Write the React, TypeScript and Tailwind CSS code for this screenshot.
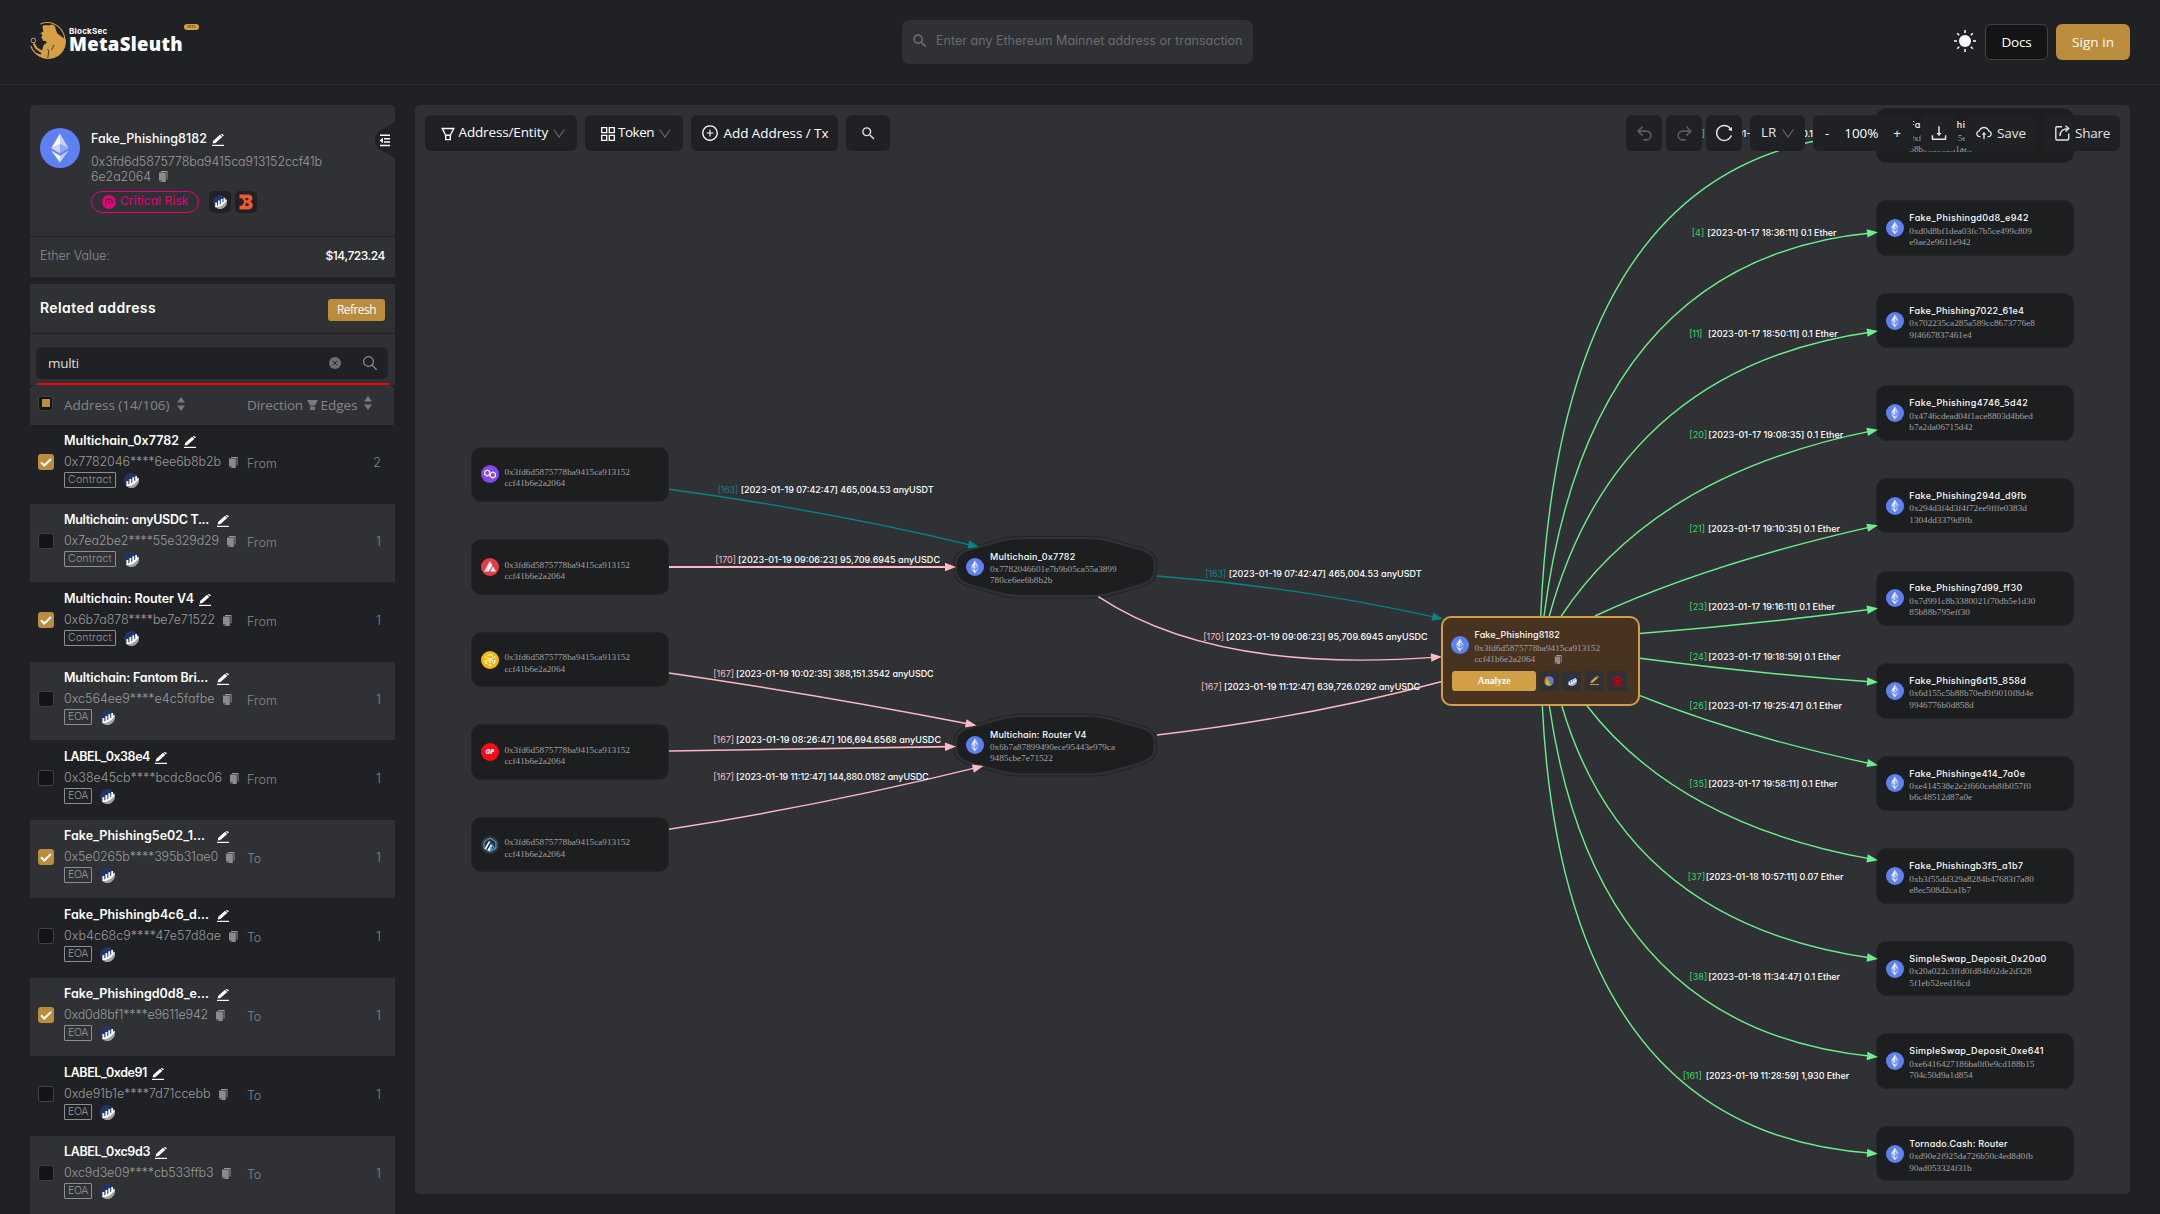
import { useLayoutEffect, useRef, useState } from "react";
import type { ReactNode } from "react";
import { Undo2, Redo2 } from "lucide-react";
import { AiOutlinePlusCircle, AiOutlineReload, AiOutlineDownload, AiOutlineCloudUpload } from "react-icons/ai";
import { MdSearch } from "react-icons/md";

const POP = "font-[Inter,sans-serif] [font-feature-settings:'cv11']";
const SEGOE = "font-['Open_Sans',sans-serif]";

/* Text that is tracked so that it fills exactly `w` pixels. */
function Fit({ w, className = "", children }: { w: number; className?: string; children: string }) {
  const ref = useRef<HTMLSpanElement>(null);
  const [ls, setLs] = useState(0);
  useLayoutEffect(() => {
    const el = ref.current;
    if (!el) return;
    const now = parseFloat(el.style.letterSpacing || "0") || 0;
    const natural = el.getBoundingClientRect().width - now * children.length;
    setLs((w - natural) / children.length);
  }, [w, children]);
  return (
    <span ref={ref} className={`inline-block shrink-0 whitespace-pre ${className}`} style={{ letterSpacing: `${ls}px` }}>
      {children}
    </span>
  );
}

/* ---------- icons ---------- */

function Eth({ size }: { size: number }) {
  return (
    <svg width={size} height={size} viewBox="0 0 40 40" className="shrink-0">
      <circle cx="20" cy="20" r="20" fill="#5d80f3" />
      <path d="M20 5.5v10.8l8.6 3.9z" fill="#c3d0fb" />
      <path d="M20 5.5l-8.8 14.7 8.8-3.9z" fill="#fff" />
      <path d="M20 16.3l-8.8 3.9 8.800 5.200z" fill="#c9d5fb" />
      <path d="M20 16.3l8.600 3.900-8.600 5.200z" fill="#8fa8f8" />
      <path d="M11.200 22.600L20 27.700v6.800z" fill="#fff" />
      <path d="M28.600 22.600L20 27.700v6.800z" fill="#c3d0fb" />
    </svg>
  );
}

function Pencil({ className = "", color = "#fff", size = 12 }: { className?: string; color?: string; size?: number }) {
  return (
    <svg width={size} height={size} viewBox="0 0 12 12" className={`shrink-0 ${className}`}>
      <path d="M.6 9.600l.7-2.900L8 .7 10.200 2.900 3.500 9zM8.700.3L9.500 0 12 1.100l-1.200 1.300z" fill={color} />
      <rect x="0" y="10.800" width="12" height="1.200" fill={color} />
    </svg>
  );
}

function Copy({ className = "", size = 11 }: { className?: string; size?: number }) {
  return (
    <svg width={size - 1} height={size} viewBox="0 0 10 11" className={`shrink-0 ${className}`}>
      <path d="M3 0h6.500v8.600H8.600V1H3z" fill="#9a9a9a" />
      <path d="M1 1.600h6.800V11H3.400V9.200H1z" fill="#8b8b8b" />
      <path d="M1 9.800h1.800V11z" fill="#8b8b8b" />
    </svg>
  );
}

function Etherscan({ size = 15, className = "" }: { size?: number; className?: string }) {
  return (
    <svg width={size} height={size} viewBox="0 0 16 16" className={`shrink-0 ${className}`}>
      <path d="M2 13.300A8 8 0 1 1 15.700 5.800C13.500 9.500 9 12.800 2 13.300z" fill="#22356a" />
      <path d="M3.200 14.400A8 8 0 0 0 15.800 6.300C13.800 10 9.300 13.500 3.200 14.400z" fill="#a3a3a2" />
      <path d="M2.600 8.600h2v3.700l1.200-.5V6.300h2v4.700l1.100-.7V4.600h2v4.300l1.100-1V3.300h1.900v2.900l1.200-1.500.8 1.600C13.800 10 9.300 13.800 3.200 14.400c-.6-.5-.9-.9-1.200-1.300l.6-.3z" fill="#fff" />
    </svg>
  );
}

function Chevron({ className = "" }: { className?: string }) {
  return (
    <svg width="12" height="9" viewBox="0 0 12 9" className={`shrink-0 ${className}`}>
      <path d="M.6.5L6 8 11.400.5" fill="none" stroke="#6b6c6f" strokeWidth="1.100" />
    </svg>
  );
}

function Sorter({ className = "" }: { className?: string }) {
  return (
    <svg width="8" height="14" viewBox="0 0 8 14" className={`shrink-0 ${className}`}>
      <path d="M4 0l4 5.500H0zM4 14L0 8.500h8z" fill="#77787b" />
    </svg>
  );
}

function Logo() {
  return (
    <svg width="36" height="38" viewBox="0 0 36 38" className="shrink-0">
      <path d="M10.500 2A17.500 17.500 0 1 1 .8 24" fill="none" stroke="#d59f45" strokeWidth="1.100" />
      <path d="M12.300 4.300L15 3l3.500.6L22.300 2.500 25 4.300l.8 3.500 1.400 3.500L32 15l3.800 2.500A17.500 17.500 0 0 1 18 37C12 36.800 7.500 34 4.800 30.500l5.700 2 1-1.300-6.300-4.700-2.400-4.700 1.800-.8 2.500 4.500 5 3 1.400-5.300 3.500-2.700-1.800-1.700-2.200.2-.7-2.200-1.200-1.300 1.300-2-.4-1.200-1.500-.3.700-1.300 2.200-1.200z" fill="#d59f45" />
      <circle cx="3.400" cy="18.500" r="2.300" fill="none" stroke="#d59f45" strokeWidth="1" />
      <path d="M17.500 27l1.300 2-1 7M24 23l-2.400 5M27 4.500l2 4.500" stroke="#202125" strokeWidth=".8" fill="none" />
    </svg>
  );
}

/* ---------- sidebar ---------- */

type Row = { name: string; nw: number; addr: string; aw: number; on?: boolean; dir: string; n: string; tag: string; wide?: boolean };
const rows: Row[] = [
  { name: "Multichain_0x7782", nw: 115, addr: "0x7782046****6ee6b8b2b", aw: 157, on: true, dir: "From", n: "2", tag: "Contract" },
  { name: "Multichain: anyUSDC T...", nw: 145, wide: true, addr: "0x7ea2be2****55e329d29", aw: 155, dir: "From", n: "1", tag: "Contract" },
  { name: "Multichain: Router V4", nw: 130, addr: "0x6b7a878****be7e71522", aw: 151, on: true, dir: "From", n: "1", tag: "Contract" },
  { name: "Multichain: Fantom Bri...", nw: 144, wide: true, addr: "0xc564ee9****e4c5fafbe", aw: 150.500, dir: "From", n: "1", tag: "EOA" },
  { name: "LABEL_0x38e4", nw: 86, addr: "0x38e45cb****bcdc8ac06", aw: 158, dir: "From", n: "1", tag: "EOA" },
  { name: "Fake_Phishing5e02_1...", nw: 141, wide: true, addr: "0x5e0265b****395b31ae0", aw: 154, on: true, dir: "To", n: "1", tag: "EOA" },
  { name: "Fake_Phishingb4c6_d...", nw: 145, wide: true, addr: "0xb4c68c9****47e57d8ae", aw: 157, dir: "To", n: "1", tag: "EOA" },
  { name: "Fake_Phishingd0d8_e...", nw: 145, wide: true, addr: "0xd0d8bf1****e9611e942", aw: 144, on: true, dir: "To", n: "1", tag: "EOA" },
  { name: "LABEL_0xde91", nw: 83, addr: "0xde91b1e****7d71ccebb", aw: 146.500, dir: "To", n: "1", tag: "EOA" },
  { name: "LABEL_0xc9d3", nw: 86, addr: "0xc9d3e09****cb533ffb3", aw: 149.500, dir: "To", n: "1", tag: "EOA" },
];

function AddressRow({ r, light }: { r: Row; light: boolean }) {
  return (
    <div className={`flex h-[79px] border-b border-[#202125] pl-2 pr-3.5 ${light ? "bg-[#303135]" : "bg-[#202125]"}`}>
      <div className="mt-[29px] w-[26px]">
        {r.on ? (
          <div className="flex size-4 items-center justify-center rounded-[3px] bg-[#bb8c3c]">
            <svg width="12" height="9" viewBox="0 0 12 9">
              <path d="M1 4.200l3.300 3.300L11 1" fill="none" stroke="#fff" strokeWidth="2" />
            </svg>
          </div>
        ) : (
          <div className="size-4 rounded-[3px] border border-[#404144] bg-[#141414]" />
        )}
      </div>
      <div className="w-[183px] pt-[6px]">
        <div className="flex h-5 items-center">
          <div className={r.wide ? "flex w-[153px]" : "flex"}>
            <Fit w={r.nw} className={`${POP} text-[12.500px] leading-5 font-semibold text-white`}>{r.name}</Fit>
          </div>
          <Pencil className={`mt-[2px] ${r.wide ? "" : "ml-[5px]"}`} />
        </div>
        <div className="mt-[1px] flex h-5 items-center">
          <Fit w={r.aw} className={`${POP} text-[12.500px] leading-5 font-light text-[#9b9b9b]`}>{r.addr}</Fit>
          <Copy className="ml-[7px]" />
        </div>
        <div className="mt-0 flex items-center">
          <div className={`flex h-4 items-center justify-center rounded-[1px] border border-[#8e8e8e] ${r.tag === "EOA" ? "w-7" : "w-[52px]"}`}>
            <Fit w={r.tag === "EOA" ? 20 : 44} className={`${POP} text-[10.500px] leading-4 font-light text-[#9b9b9b]`}>{r.tag}</Fit>
          </div>
          <Etherscan className="ml-2" />
        </div>
      </div>
      <div className={`${POP} mt-[29px] flex-1 text-[12.500px] leading-5 font-light text-[#85868a]`}>
        <Fit w={r.dir === "To" ? 14 : 30}>{r.dir}</Fit>
      </div>
      <div className={`${POP} mt-[28px] text-[12.500px] leading-5 font-light text-[#85868a]`}>{r.n}</div>
    </div>
  );
}

function Sidebar() {
  return (
    <aside className="w-[365px] shrink-0">
      <section className="relative rounded-t-[5px] bg-[#303135]">
        <svg width="21" height="40" viewBox="0 0 21 40" className="absolute top-[15px] right-0">
          <path d="M21 0c-1 8-20 6-20 20s19 12 20 20z" fill="#202125" />
          <path d="M6 15.200h10M10 18.700h6M10 22h6M6 25.500h10" stroke="#fff" strokeWidth="1.500" />
          <path d="M5.500 20.400l3.500-2.600v5.200z" fill="#fff" />
        </svg>
        <div className="flex h-[131px] pl-2.5 pt-[23px]">
          <Eth size={40} />
          <div className="ml-[11px]">
            <div className="mt-[1px] flex h-5 items-center">
              <Fit w={116} className={`${POP} text-[12.500px] font-medium text-white`}>Fake_Phishing8182</Fit>
              <Pencil className="mt-[2px] ml-[5px]" />
            </div>
            <div className={`${POP} mt-[5px] text-[12.500px] leading-[15px] font-light text-[#9b9b9b]`}>
              <div><Fit w={231}>0x3fd6d5875778ba9415ca913152ccf41b</Fit></div>
              <div className="flex items-center">
                <Fit w={60}>6e2a2064</Fit>
                <Copy className="ml-[7px]" />
              </div>
            </div>
            <div className="mt-[7px] flex items-center">
              <div className="flex h-[22px] w-[108px] items-center rounded-full border border-[#e6007a] pl-2.5">
                <svg width="14" height="14" viewBox="0 0 14 14">
                  <circle cx="7" cy="7" r="7" fill="#e6007a" />
                  <path d="M4.500 9.500a3.300 3.300 0 1 1 5 0M6 6.800h1.400v3" fill="none" stroke="#303135" strokeWidth="1.100" />
                </svg>
                <Fit w={68.500} className={`${POP} -mt-[3px] ml-1 text-[12px] leading-5 text-[#e6007a]`}>Critical Risk</Fit>
              </div>
              <div className="ml-2.5 flex size-[22px] items-center justify-center rounded-[5px] bg-[#202125]"><Etherscan size={14} /></div>
              <div className="ml-1 flex size-[22px] items-center justify-center rounded-[5px] bg-[#202125]">
                <svg width="14" height="16" viewBox="0 0 14 16">
                  <path d="M.5.500h8.700c5 0 5.300 5.800 2 7 4 1.500 3.300 8-1.900 8H.5v-3.700h2.300L5 8.500V7L3 4.200H.5zM6.500 4v2.300h1.800c1.500 0 1.500-2.300 0-2.300zM6.500 9.300v2.700h2c1.700 0 1.700-2.700 0-2.700z" fill="#f4562f" fillRule="evenodd" />
                </svg>
              </div>
            </div>
          </div>
        </div>
        <div className={`${POP} flex h-[41px] items-center justify-between border-t border-[#202125] px-2.5 pb-[2px] text-[12.500px]`}>
          <Fit w={70} className="font-light text-[#8e8e90]">Ether Value:</Fit>
          <Fit w={59.500} className="text-[12px] font-medium text-white">$14,723.24</Fit>
        </div>
      </section>

      <section className="mt-[7px] bg-[#303135]">
        <div className="flex h-[49px] items-center justify-between px-2.5">
          <Fit w={116} className={`${POP} -mt-[2px] text-[14px] font-semibold text-white`}>Related address</Fit>
          <div className={`${SEGOE} mt-[2px] flex h-[22px] w-[57px] items-center justify-center rounded-[3px] bg-[#bb8c3c] text-[12px] text-white`}>
            <Fit w={39}>Refresh</Fit>
          </div>
        </div>
        <div className="border-t border-[#202125] px-1.5 pt-[13px]">
          <div className="flex h-8 w-[352px] items-center rounded-md bg-[#202125] pr-[11px] pl-3">
            <div className="flex flex-1">
              <Fit w={31} className={`${SEGOE} text-[13.500px] text-[#dedede]`}>multi</Fit>
            </div>
            <svg width="12" height="12" viewBox="0 0 12 12">
              <circle cx="6" cy="6" r="6" fill="#6c6d6f" />
              <path d="M3.800 3.800l4.400 4.400M8.200 3.800L3.800 8.200" stroke="#202125" strokeWidth="1" />
            </svg>
            <svg width="14" height="14" viewBox="0 0 14 14" className="ml-[22px]">
              <circle cx="5.500" cy="5.500" r="4.900" fill="none" stroke="#909193" strokeWidth="1.100" />
              <path d="M9 9l4.700 4.700" stroke="#909193" strokeWidth="1.200" />
            </svg>
          </div>
          <div className="mt-1 ml-[1px] h-0.5 w-[352px] bg-[#fb0006]" />
        </div>
      </section>
      <div className={`${SEGOE} flex h-10 w-[364px] items-center rounded-t-[5px] bg-[#303135] pl-2 text-[13.500px] text-[#85868a]`}>
        <div className="-mt-1 mr-[11px] flex size-[15px] items-center justify-center rounded-[3px] border border-[#404144] bg-[#141414]">
          <div className="size-2 bg-[#bb8c3c]" />
        </div>
        <Fit w={105.500}>Address (14/106)</Fit>
        <Sorter className="-mt-[3px] ml-[7px]" />
        <Fit w={56} className="ml-[62.500px]">Direction</Fit>
        <svg width="11" height="10" viewBox="0 0 11 10" className="ml-[4px]">
          <path d="M0 0h11L8 5.500H3zM3 6.500h5V10H3z" fill="#77787b" />
        </svg>
        <Fit w={37} className="ml-[2.500px]">Edges</Fit>
        <Sorter className="-mt-[5px] ml-[6px]" />
      </div>
      {rows.map((r, i) => (
        <AddressRow key={r.name} r={r} light={i % 2 === 1} />
      ))}
    </aside>
  );
}

/* ---------- graph ---------- */

const OX = 415;
const OY = 105;
const GREEN = "#68f08a";
const PINK = "#ffb8c4";
const TEAL = "#068580";

type Edge = { p: number[]; c: string; w?: number; arrow?: boolean };
const edges: Edge[] = [
  { p: [1540.700, 616, 1561, 147, 1878, 134], c: GREEN },
  { p: [1544, 616, 1590, 259, 1878, 232.300], c: GREEN },
  { p: [1549.300, 616, 1617, 368, 1878, 331], c: GREEN },
  { p: [1561.300, 616, 1655, 474, 1878, 429.700], c: GREEN },
  { p: [1595, 616, 1707, 564, 1878, 525.300], c: GREEN },
  { p: [1640, 633.500, 1760, 624, 1878, 608.300], c: GREEN },
  { p: [1640, 658.300, 1760, 674, 1878, 682.300], c: GREEN },
  { p: [1640, 695.700, 1740, 736, 1878, 765.300], c: GREEN },
  { p: [1586.700, 705.500, 1679, 825, 1878, 860.300], c: GREEN },
  { p: [1561.700, 705.500, 1626, 924, 1878, 959], c: GREEN },
  { p: [1549.300, 705.500, 1596, 1030, 1878, 1057], c: GREEN },
  { p: [1542.300, 705.500, 1563, 1133, 1878, 1153.700], c: GREEN },
  { p: [669, 489.300, 830, 511, 979, 547], c: TEAL },
  { p: [669, 567, 812, 567, 956, 567], c: PINK, w: 2 },
  { p: [669, 673, 820, 695, 976.500, 725.500], c: PINK },
  { p: [669, 751, 812, 749, 956, 746.500], c: PINK, w: 1.600 },
  { p: [669, 829.300, 825, 805, 983.500, 766], c: PINK },
  { p: [1156.700, 576, 1300, 587, 1443, 619], c: TEAL },
  { p: [1098.300, 596.700, 1215, 674, 1442, 656.700], c: PINK },
  { p: [1157, 735, 1310, 717, 1441, 681.700], c: PINK, arrow: false },
];

type Label = { tag: string; text: string; tx: number; tw: number; x: number; w: number; y: number; c: string };
const TAG = "#2fdc68";
const labels: Label[] = [
  { tag: "[3]", tx: 1692, tw: 13, text: "[2023-01-17 18:35:47] 0.1 Ether", x: 1708, w: 129, y: 137, c: TAG },
  { tag: "[4]", tx: 1691.700, tw: 12.500, text: "[2023-01-17 18:36:11] 0.1 Ether", x: 1707.300, w: 129.300, y: 236, c: TAG },
  { tag: "[11]", tx: 1689.300, tw: 13, text: "[2023-01-17 18:50:11] 0.1 Ether", x: 1708, w: 129.700, y: 337, c: TAG },
  { tag: "[20]", tx: 1689.300, tw: 18, text: "[2023-01-17 19:08:35] 0.1 Ether", x: 1708.300, w: 135, y: 438, c: TAG },
  { tag: "[21]", tx: 1689.300, tw: 15.700, text: "[2023-01-17 19:10:35] 0.1 Ether", x: 1708, w: 132, y: 532, c: TAG },
  { tag: "[23]", tx: 1689.300, tw: 18, text: "[2023-01-17 19:16:11] 0.1 Ether", x: 1708.300, w: 126.700, y: 610, c: TAG },
  { tag: "[24]", tx: 1689.300, tw: 18, text: "[2023-01-17 19:18:59] 0.1 Ether", x: 1708.300, w: 132.300, y: 660, c: TAG },
  { tag: "[26]", tx: 1689.300, tw: 18, text: "[2023-01-17 19:25:47] 0.1 Ether", x: 1708.300, w: 133.700, y: 709, c: TAG },
  { tag: "[35]", tx: 1689.300, tw: 18, text: "[2023-01-17 19:58:11] 0.1 Ether", x: 1708.300, w: 129.300, y: 787, c: TAG },
  { tag: "[37]", tx: 1687.700, tw: 17.500, text: "[2023-01-18 10:57:11] 0.07 Ether", x: 1705.700, w: 137.700, y: 880, c: TAG },
  { tag: "[38]", tx: 1689.300, tw: 18, text: "[2023-01-18 11:34:47] 0.1 Ether", x: 1708.300, w: 131.700, y: 980, c: TAG },
  { tag: "[161]", tx: 1682.700, tw: 19, text: "[2023-01-19 11:28:59] 1,930 Ether", x: 1705.700, w: 143.500, y: 1079, c: TAG },
  { tag: "[163]", tx: 717.700, tw: 20.500, text: "[2023-01-19 07:42:47] 465,004.53 anyUSDT", x: 740.700, w: 193, y: 493, c: TEAL },
  { tag: "[170]", tx: 715.300, tw: 20.700, text: "[2023-01-19 09:06:23] 95,709.6945 anyUSDC", x: 738, w: 202, y: 563, c: PINK },
  { tag: "[167]", tx: 713.300, tw: 20.700, text: "[2023-01-19 10:02:35] 388,151.3542 anyUSDC", x: 736, w: 197.700, y: 677, c: PINK },
  { tag: "[167]", tx: 713.300, tw: 20.700, text: "[2023-01-19 08:26:47] 106,694.6568 anyUSDC", x: 736, w: 205, y: 743, c: PINK },
  { tag: "[167]", tx: 713.300, tw: 20.700, text: "[2023-01-19 11:12:47] 144,880.0182 anyUSDC", x: 736, w: 192.700, y: 780, c: PINK },
  { tag: "[163]", tx: 1205.300, tw: 21, text: "[2023-01-19 07:42:47] 465,004.53 anyUSDT", x: 1228.700, w: 193, y: 577, c: TEAL },
  { tag: "[170]", tx: 1203.300, tw: 20.700, text: "[2023-01-19 09:06:23] 95,709.6945 anyUSDC", x: 1226, w: 201.700, y: 640, c: PINK },
  { tag: "[167]", tx: 1201, tw: 20.700, text: "[2023-01-19 11:12:47] 639,726.0292 anyUSDC", x: 1224, w: 196, y: 690, c: PINK },
];

function EdgePath({ e }: { e: Edge }) {
  const [x0, y0, cx, cy, x1, y1] = e.p;
  const a = Math.atan2(y1 - cy, x1 - cx);
  const back = e.arrow === false ? 0 : 5;
  const ex = x1 - back * Math.cos(a);
  const ey = y1 - back * Math.sin(a);
  return (
    <g>
      <path d={`M${x0} ${y0}Q${cx} ${cy} ${ex} ${ey}`} fill="none" stroke={e.c} strokeWidth={e.w ?? 1.400} />
      {e.arrow !== false && (
        <path d="M0 0L-11 -4.200V4.200z" fill={e.c} transform={`translate(${x1} ${y1}) rotate(${(a * 180) / Math.PI})`} />
      )}
    </g>
  );
}

const OCT =
  "M972 550L1003 541.500Q1012 539.300 1021 539.300H1090Q1099 539.300 1108 541.500L1139 550Q1153.500 554 1153.500 563V571Q1153.500 580 1139 584.500L1108 593Q1099 595 1090 595H1021Q1012 595 1003 593L972 584.500Q957 580 957 571V563Q957 554 972 550z";
const RING =
  "M970 547.500L1002 538.500Q1011 536.300 1020 536.300H1091Q1100 536.300 1109 538.500L1141 547.500Q1156.300 552 1156.300 562V572Q1156.300 582 1141 587L1109 596Q1100 598 1091 598H1020Q1011 598 1002 596L970 587Q954 582 954 572V562Q954 552 970 547.500z";

function At({ x, y, className = "", children }: { x: number; y: number; className?: string; children: ReactNode }) {
  return (
    <div className={`absolute ${className}`} style={{ left: x - OX, top: y - OY }}>
      {children}
    </div>
  );
}

const NODE = "flex h-[55.500px] w-[197.300px] items-center rounded-[10px] border border-[#242528] bg-[#1d1e20]";

function NodeText({ name, nw, a, b }: { name?: string; nw?: number; a: string; b: string }) {
  return (
    <div>
      {name && (
        <div className={`${POP} flex h-3 text-[9px] leading-3 font-medium text-white`}>
          <Fit w={nw ?? 80}>{name}</Fit>
        </div>
      )}
      <div className="mt-[1.500px] -mb-[1.500px] font-['Liberation_Serif',serif] text-[9.200px] leading-[11.400px] text-[#a0a1a2]">
        <div>{a}</div>
        <div>{b}</div>
      </div>
    </div>
  );
}

const targets = [
  { name: "Fake_Phishing5e02_1ae0", nw: 118, a: "0xf5e0265b15e79c40d2ab68e7", b: "58b00395b31ae0" },
  { name: "Fake_Phishingd0d8_e942", nw: 119.700, a: "0xd0d8bf1dea03fc7b5ce499c809", b: "e9ae2e9611e942" },
  { name: "Fake_Phishing7022_61e4", nw: 115, a: "0x702235ca285a589cc8673776e8", b: "9f4667837461e4" },
  { name: "Fake_Phishing4746_5d42", nw: 119, a: "0x4746cdead04f1ace8803d4b6ed", b: "b7a2da06715d42" },
  { name: "Fake_Phishing294d_d9fb", nw: 117.500, a: "0x294d3f4d3f4f72ee9fffe0383d", b: "1304dd3379d9fb" },
  { name: "Fake_Phishing7d99_ff30", nw: 113.300, a: "0x7d991c8b3380021f70db5e1d30", b: "85b88b795eff30" },
  { name: "Fake_Phishing6d15_858d", nw: 117, a: "0x6d155c5b88b70ed9f9010f8d4e", b: "9946776b0d858d" },
  { name: "Fake_Phishinge414_7a0e", nw: 116, a: "0xe414538e2e2f660ceb8fb057f0", b: "b6c48512d87a0e" },
  { name: "Fake_Phishingb3f5_a1b7", nw: 114, a: "0xb3f55dd329a8284b47683f7a80", b: "e8ec508d2ca1b7" },
  { name: "SimpleSwap_Deposit_0x20a0", nw: 137.500, a: "0x20a022c3ffd0fd84b92de2d328", b: "5f1eb52eed16cd" },
  { name: "SimpleSwap_Deposit_0xe641", nw: 134.500, a: "0xe6416427186ba0f0e9cd188b15", b: "704c50d9a1d854" },
  { name: "Tornado.Cash: Router", nw: 98.500, a: "0xd90e2f925da726b50c4ed8d0fb", b: "90ad053324f31b" },
];

const chains = [
  <svg key="polygon" width="18" height="18" viewBox="0 0 18 18">
    <circle cx="9" cy="9" r="9" fill="#8548ea" />
    <path d="M8.700 9.400L6.300 11 3.700 9.500v-3L6.300 5l2.400 1.500v3.300M9.300 8.500v3L11.800 13l2.600-1.500v-3L11.800 7 9.300 8.500 8.700 9" fill="none" stroke="#fff" strokeWidth="1.200" strokeLinejoin="round" />
  </svg>,
  <svg key="avalanche" width="18" height="18" viewBox="0 0 18 18">
    <circle cx="9" cy="9" r="9" fill="#ea3943" />
    <path d="M8.900 3.500l2.200 3.800-3.300 5.900H3.600zM12.100 8.900l2.500 4.300H9.700z" fill="#fff" stroke="#fff" strokeWidth=".5" strokeLinejoin="round" />
  </svg>,
  <svg key="bnb" width="18" height="18" viewBox="0 0 18 18">
    <circle cx="9" cy="9" r="9" fill="#f4b70b" />
    <path d="M9 3.300l2.500 1.400M9 3.300L6.500 4.700M4.300 6.800v-.9l.8-.5M13.700 6.800v-.9l-.8-.5M4.300 9v2.500L6.300 12.700M13.700 9v2.500l-2 1.200M7.700 13.800L9 14.600l1.300-.8M6 6.800l3 1.700 3-1.700M9 8.500v3.800M6 9.300l1.500.9M12 9.300l-1.500.9" fill="none" stroke="#fff" strokeWidth="1.300" />
  </svg>,
  <svg key="optimism" width="18" height="18" viewBox="0 0 18 18">
    <circle cx="9" cy="9" r="9" fill="#ff0a12" />
    <text x="9" y="11.300" textAnchor="middle" fontFamily="Open Sans" fontWeight="800" fontStyle="italic" fontSize="6.500" fill="#fff">OP</text>
  </svg>,
  <svg key="arbitrum" width="18" height="18" viewBox="0 0 18 18">
    <circle cx="9" cy="9" r="9" fill="#2a3a52" />
    <path d="M9 2.300l5.900 3.300v6.800L9 15.700l-5.900-3.300V5.600z" fill="#213147" stroke="#8fa9c2" strokeWidth=".9" />
    <path d="M3.600 12.500L7.600 5.500h2L5 13.300z" fill="#fff" />
    <path d="M6.500 14L10.200 7.500l1.200 2L9.200 14.500 8 15z" fill="#fff" />
    <path d="M11 7.500l3.300 5-1.400.8-3-4.700zM9.900 10l2 3.500-1.600 1-1.200-2.400z" fill="#28a0f0" />
  </svg>,
];

function SmallButton({ children }: { children: ReactNode }) {
  return <div className="flex h-[20px] w-[19.500px] items-center justify-center rounded-[3px] bg-[#303135]">{children}</div>;
}

function Graph() {
  return (
    <div className="absolute inset-0">
      {chains.map((icon, i) => (
        <At key={i} x={471.400} y={446.600 + i * 92.580}>
          <div className={`${NODE} pl-[8.500px]`}>
            <div className="mr-[5.500px] size-[18px]">{icon}</div>
            <div className="pt-[5px]"><NodeText a="0x3fd6d5875778ba9415ca913152" b="ccf41b6e2a2064" /></div>
          </div>
        </At>
      ))}

      {targets.map((t, i) => (
        <At key={t.name} x={1876.300} y={107.600 + i * 92.580}>
          <div className={`${NODE} pl-[8.500px]`}>
            <Eth size={18} />
            <div className="ml-[5.500px] pt-[3px]"><NodeText {...t} /></div>
          </div>
        </At>
      ))}

      <svg width="1715" height="1089" viewBox="415 105 1715 1089" className="absolute inset-0">
        {[0, 178].map((dy) => (
          <g key={dy} transform={`translate(0 ${dy})`}>
            <path d={RING} fill="#303135" stroke="#232427" strokeWidth="1.200" />
            <path d={OCT} fill="#1d1e20" />
          </g>
        ))}
        {edges.map((e, i) => (
          <EdgePath key={i} e={e} />
        ))}
        <g className={POP} fontSize="9">
          {labels.map((l, i) => (
            <g key={i}>
              <text x={l.tx} y={l.y} textLength={l.tw} fill={l.c}>{l.tag}</text>
              <text x={l.x} y={l.y} textLength={l.w} fill="#fff" fontWeight="500">{l.text}</text>
            </g>
          ))}
        </g>
      </svg>

      <At x={966} y={549.500} className="flex items-center">
        <Eth size={18} />
        <div className="ml-[6px] pt-[1px]"><NodeText name="Multichain_0x7782" nw={85.500} a="0x7782046601e7b9b05ca55a3899" b="780ce6ee6b8b2b" /></div>
      </At>
      <At x={966} y={727.500} className="flex items-center">
        <Eth size={18} />
        <div className="ml-[6px] pt-[1px]"><NodeText name="Multichain: Router V4" nw={96.500} a="0x6b7a87899490ece95443e979ca" b="9485cbe7e71522" /></div>
      </At>

      <At x={1440.500} y={615.500}>
        <div className="h-[90px] w-[199.500px] rounded-[10px] border-2 border-[#d39f46] bg-[#483321] pt-[11.500px] pl-[8.500px]">
          <div className="flex">
            <div className="pt-[7px]"><Eth size={18} /></div>
            <div className="ml-[5.500px]"><NodeText name="Fake_Phishing8182" nw={85.500} a="0x3fd6d5875778ba9415ca913152" b="ccf41b6e2a2064" /></div>
            <Copy size={9} className="mt-[25.500px] -ml-[46px]" />
          </div>
          <div className="mt-[7px] ml-[1px] flex gap-[3.200px]">
            <div className="flex h-[20px] w-[84px] items-center justify-center rounded-[3px] bg-[#d39f46] font-['Liberation_Serif',serif] text-[9.500px] font-bold text-white">Analyze</div>
            <SmallButton>
              <svg width="10" height="10" viewBox="0 0 10 10">
                <circle cx="5" cy="5" r="4.800" fill="#7b6bd6" />
                <path d="M2 1.300A4.800 4.800 0 0 0 2 8.700L5.500 5z" fill="#e0402f" />
                <path d="M2.500 1L6.500 9.500A4.800 4.800 0 0 1 1.500 8z" fill="#f0b429" />
                <path d="M3.500.5l4 8.500-1.600.7L2.400 1.200z" fill="#3fbf62" />
              </svg>
            </SmallButton>
            <SmallButton><Etherscan size={10} /></SmallButton>
            <SmallButton><Pencil size={9} color="#d39f46" /></SmallButton>
            <SmallButton>
              <svg width="9" height="10" viewBox="0 0 9 10">
                <path d="M0 2h9M3 2V.6h3V2M1.200 2v7.400h6.600V2M3.400 4v3.800M5.600 4v3.800" fill="none" stroke="#c3000f" strokeWidth="1.200" />
              </svg>
            </SmallButton>
          </div>
        </div>
      </At>
    </div>
  );
}

/* ---------- toolbar ---------- */

const BTN = "flex h-9 items-center rounded-[6px] bg-[#202125]";

function Toolbar() {
  return (
    <div className={`${SEGOE} absolute inset-x-2.5 top-2.5 flex justify-between text-[13.500px] text-white`}>
      <div className="flex gap-2">
        <div className={`${BTN} w-[152px] pl-4`}>
          <svg width="14" height="14" viewBox="0 0 14 14" className="mt-[2px]">
            <path d="M1.300 1.500h11.400L9.300 8.300v4.300H4.700V8.300zM4.700 8.300h4.600" fill="none" stroke="#fff" strokeWidth="1.400" />
          </svg>
          <Fit w={89.500} className="-mt-[2px] ml-[3.500px]">Address/Entity</Fit>
          <Chevron className="ml-[5px]" />
        </div>
        <div className={`${BTN} w-[98px] pl-4`}>
          <svg width="14" height="14" viewBox="0 0 14 14" className="mt-[2px]">
            <path d="M.7.700h5v5h-5zM8.300.700h5v5h-5zM.7 8.300h5v5h-5zM8.300 8.300h5v5h-5z" fill="none" stroke="#fff" strokeWidth="1.300" />
          </svg>
          <Fit w={36} className="-mt-[2px] ml-[3px]">Token</Fit>
          <Chevron className="ml-[5px]" />
        </div>
        <div className={`${BTN} w-[147px] pl-2.5`}>
          <AiOutlinePlusCircle size={18} />
          <Fit w={105} className="ml-[4.500px]">Add Address / Tx</Fit>
        </div>
        <div className={`${BTN} w-11 justify-center`}>
          <MdSearch size={17} color="#dcdcdc" />
        </div>
      </div>
      <div className="flex text-[#e4e4e4]">
        <div className={`${BTN} w-9 justify-center`}><Undo2 size={19} color="#5b5c5f" /></div>
        <div className={`${BTN} ml-1 w-9 justify-center`}><Redo2 size={19} color="#5b5c5f" /></div>
        <div className={`${BTN} ml-1 w-9 justify-center`}><AiOutlineReload size={20} /></div>
        <div className={`${BTN} ml-2 w-[55px] pl-[11px]`}>
          <Fit w={15.500} className="-mt-[2px]">LR</Fit>
          <Chevron className="ml-[5px]" />
        </div>
        <div className={`${BTN} ml-2 w-[100px] justify-between px-3 text-white`}>
          <span>-</span>
          <Fit w={34}>100%</Fit>
          <span>+</span>
        </div>
        <div className={`${BTN} ml-2 w-9 justify-center`}><AiOutlineDownload size={20} /></div>
        <div className={`${BTN} ml-2 w-[70px] pl-2.5`}>
          <AiOutlineCloudUpload size={18} />
          <Fit w={29} className="ml-1">Save</Fit>
        </div>
        <div className={`${BTN} ml-2 w-[77px] pl-3`}>
          <svg width="15" height="16" viewBox="0 0 15 16">
            <path d="M7 1.700H2.200Q.8 1.700.8 3.200V13.500Q.8 15 2.200 15H12.300Q13.700 15 13.700 13.500V8.500M5 11c0-5 3-7.400 8.500-7.400M10.500.7l3.200 2.900-3.200 2.900" fill="none" stroke="#e4e4e4" strokeWidth="1.400" />
          </svg>
          <Fit w={35} className="ml-[5px]">Share</Fit>
        </div>
      </div>
    </div>
  );
}

function Header() {
  return (
    <header className="flex h-[85px] items-start border-b border-[#2f302d] px-[30px]">
      <div className="flex w-[872px] items-start pt-[22px]">
        <Logo />
        <div className="ml-[3px] flex flex-col items-start pt-[4px]">
          <Fit w={38.500} className="font-[Inter,sans-serif] text-[8px] leading-[10px] font-bold text-white">BlockSec</Fit>
          <Fit w={114} className={`${SEGOE} -mt-1 text-[18.500px] leading-[24px] font-extrabold text-white`}>MetaSleuth</Fit>
        </div>
        <div className="mt-[2px] ml-[1px] flex h-1.5 w-[15px] items-center justify-center rounded-full bg-[#d59f45] font-[Inter,sans-serif] text-[3px] leading-none font-bold text-[#6b4d1c]">BETA</div>
      </div>
      <div className="mt-5 flex h-11 w-[351px] items-center rounded-lg bg-[#303135] pb-[2px] pl-[9px]">
        <MdSearch size={18} color="#6f7073" />
        <Fit w={306.500} className={`${POP} ml-[7px] text-[12.500px] text-[#6a6b6e]`}>Enter any Ethereum Mainnet address or transaction</Fit>
      </div>
      <div className={`${SEGOE} mt-6 ml-auto flex items-center text-[13.500px] text-white`}>
        <svg width="22" height="22" viewBox="0 0 22 22" className="mb-[2px]">
          <circle cx="11" cy="11" r="6" fill="#fff" />
          <path d="M11 0v3M11 19v3M0 11h3M19 11h3M3.200 3.200l2 2M16.800 16.800l2 2M18.800 3.200l-2 2M5.200 16.800l-2 2" stroke="#fff" strokeWidth="1.500" />
        </svg>
        <div className="ml-[9px] flex h-9 w-[63px] items-center justify-center rounded-[6px] border border-[#424347] bg-[#141414]">
          <Fit w={30}>Docs</Fit>
        </div>
        <div className="ml-2 flex h-9 w-[74px] items-center justify-center rounded-[6px] bg-[#bb8c3c]">
          <Fit w={42}>Sign in</Fit>
        </div>
      </div>
    </header>
  );
}

export default function App() {
  return (
    <div className="h-[1214px] w-[2160px] overflow-hidden bg-[#202125]">
      <Header />
      <div className="flex gap-5 px-[30px] pt-5">
        <Sidebar />
        <main className="relative h-[1089px] w-[1715px] overflow-hidden rounded-[5px] bg-[#303135]">
          <Graph />
          <Toolbar />
        </main>
      </div>
    </div>
  );
}
